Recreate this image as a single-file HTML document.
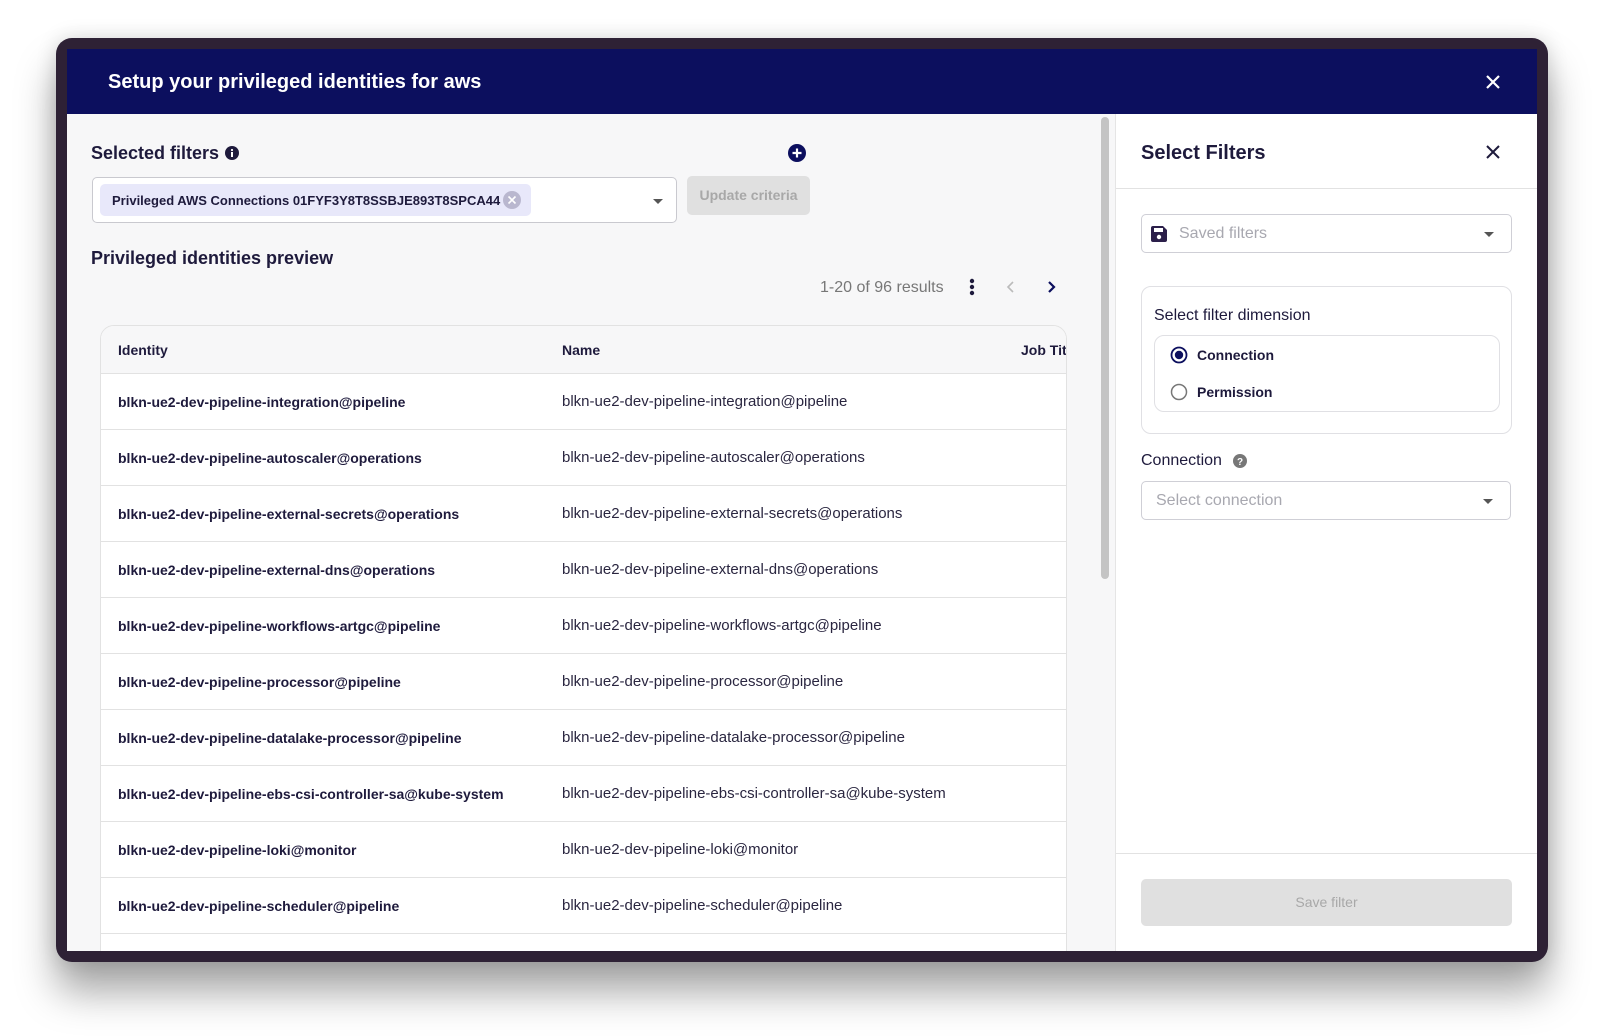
<!DOCTYPE html>
<html><head><meta charset="utf-8"><style>
*{box-sizing:border-box;margin:0;padding:0}
body{width:1604px;height:1036px;background:#fff;font-family:"Liberation Sans",sans-serif;position:relative;overflow:hidden;color:#1e1a3c}
.bezel{position:absolute;left:56px;top:38px;width:1492px;height:924px;background:#2e2135;border-radius:16px;box-shadow:0 30px 40px rgba(0,0,0,.35),0 0 20px rgba(0,0,0,.15)}
.modal{position:absolute;left:67px;top:49px;width:1470px;height:902px;background:#f7f7f8;overflow:hidden}
.hdr{position:absolute;left:0;top:0;width:100%;height:65px;background:#0c0f5e;color:#fff}
.hdr .t{position:absolute;left:41px;top:22px;font-size:20px;font-weight:bold}
.abs{position:absolute;white-space:nowrap}
.h3{font-size:18px;font-weight:bold;color:#1e1a3c}
.row{position:absolute;left:0;width:100%;height:56px;border-top:1px solid #e2e2e2;font-size:14px}
.row .a{position:absolute;left:17px;top:20px;font-weight:bold;white-space:nowrap}
.row .b{position:absolute;left:461px;top:19px;color:#2a2640;font-size:15px;white-space:nowrap}
.rp{position:absolute;left:1048px;top:65px;width:422px;height:837px;background:#fff;border-left:1px solid #e5e5e5}
.box{position:absolute;border:1px solid #cfcfd6;border-radius:5px;background:#fff}
.caret{position:absolute;width:0;height:0;border-left:5px solid transparent;border-right:5px solid transparent;border-top:5px solid #555}
</style></head><body>
<div class="bezel"></div>
<div class="modal">
 <div class="hdr"><div class="t">Setup your privileged identities for aws</div>
  <svg class="abs" style="left:1418px;top:25px" width="16" height="16" viewBox="0 0 16 16"><path d="M2 2L14 14M14 2L2 14" stroke="#fff" stroke-width="2.2"/></svg></div>
 <div class="abs h3" style="left:24px;top:94px">Selected filters</div>
 <svg class="abs" style="left:158px;top:97px" width="14" height="14"><circle cx="7" cy="7" r="7" fill="#1e1a3c"/><rect x="6" y="6" width="2" height="5" fill="#fff"/><circle cx="7" cy="4" r="1.1" fill="#fff"/></svg>
 <svg class="abs" style="left:721px;top:95px" width="18" height="18"><circle cx="9" cy="9" r="9" fill="#0c0f5e"/><path d="M9 4.5V13.5M4.5 9H13.5" stroke="#fff" stroke-width="2.2"/></svg>
 <div class="box" style="left:25px;top:128px;width:585px;height:46px;border-color:#c9c9cf">
  <div class="abs" style="left:7px;top:6px;width:431px;height:32px;background:#e8e8fa;border-radius:5px;font-size:13px;font-weight:bold;padding:9px 0 0 12px;color:#1e1a3c">Privileged AWS Connections 01FYF3Y8T8SSBJE893T8SPCA44</div>
  <svg class="abs" style="left:410px;top:13px" width="18" height="18"><circle cx="9" cy="9" r="9" fill="#b9b7cf"/><path d="M5.5 5.5L12.5 12.5M12.5 5.5L5.5 12.5" stroke="#fff" stroke-width="1.6"/></svg>
  <div class="caret" style="left:560px;top:21px"></div>
 </div>
 <div class="abs" style="left:620px;top:127px;width:123px;height:39px;background:#e0e0e0;border-radius:5px;color:#a8a8a8;font-size:14px;font-weight:bold;text-align:center;line-height:39px">Update criteria</div>
 <div class="abs h3" style="left:24px;top:199px">Privileged identities preview</div>
 <div class="abs" style="left:753px;top:230px;font-size:16px;color:#777">1-20 of 96 results</div>
 <svg class="abs" style="left:898px;top:228px" width="14" height="20"><circle cx="7" cy="4" r="2.2" fill="#1e1a3c"/><circle cx="7" cy="10" r="2.2" fill="#1e1a3c"/><circle cx="7" cy="16" r="2.2" fill="#1e1a3c"/></svg>
 <svg class="abs" style="left:938px;top:231px" width="12" height="14"><path d="M8 2L3 7L8 12" stroke="#bbb" stroke-width="1.6" fill="none"/></svg>
 <svg class="abs" style="left:978px;top:231px" width="12" height="14"><path d="M4 2L9 7L4 12" stroke="#0c0f5e" stroke-width="2.2" fill="none"/></svg>
 <div class="abs" style="left:33px;top:276px;width:967px;height:640px;background:#fff;border:1px solid #e2e2e2;border-radius:14px 14px 0 0;overflow:hidden">
  <div class="abs" style="left:0;top:0;width:100%;height:48px;background:#f7f7f8;font-size:14px;font-weight:bold">
   <div class="abs" style="left:17px;top:16px">Identity</div><div class="abs" style="left:461px;top:16px">Name</div><div class="abs" style="left:920px;top:16px">Job Title</div></div>
  <div class="row" style="top:47px"><div class="a">blkn-ue2-dev-pipeline-integration@pipeline</div><div class="b">blkn-ue2-dev-pipeline-integration@pipeline</div></div>
  <div class="row" style="top:103px"><div class="a">blkn-ue2-dev-pipeline-autoscaler@operations</div><div class="b">blkn-ue2-dev-pipeline-autoscaler@operations</div></div>
  <div class="row" style="top:159px"><div class="a">blkn-ue2-dev-pipeline-external-secrets@operations</div><div class="b">blkn-ue2-dev-pipeline-external-secrets@operations</div></div>
  <div class="row" style="top:215px"><div class="a">blkn-ue2-dev-pipeline-external-dns@operations</div><div class="b">blkn-ue2-dev-pipeline-external-dns@operations</div></div>
  <div class="row" style="top:271px"><div class="a">blkn-ue2-dev-pipeline-workflows-artgc@pipeline</div><div class="b">blkn-ue2-dev-pipeline-workflows-artgc@pipeline</div></div>
  <div class="row" style="top:327px"><div class="a">blkn-ue2-dev-pipeline-processor@pipeline</div><div class="b">blkn-ue2-dev-pipeline-processor@pipeline</div></div>
  <div class="row" style="top:383px"><div class="a">blkn-ue2-dev-pipeline-datalake-processor@pipeline</div><div class="b">blkn-ue2-dev-pipeline-datalake-processor@pipeline</div></div>
  <div class="row" style="top:439px"><div class="a">blkn-ue2-dev-pipeline-ebs-csi-controller-sa@kube-system</div><div class="b">blkn-ue2-dev-pipeline-ebs-csi-controller-sa@kube-system</div></div>
  <div class="row" style="top:495px"><div class="a">blkn-ue2-dev-pipeline-loki@monitor</div><div class="b">blkn-ue2-dev-pipeline-loki@monitor</div></div>
  <div class="row" style="top:551px"><div class="a">blkn-ue2-dev-pipeline-scheduler@pipeline</div><div class="b">blkn-ue2-dev-pipeline-scheduler@pipeline</div></div>
  <div class="row" style="top:607px"></div>
 </div>
 <div class="abs" style="left:1034px;top:68px;width:8px;height:462px;background:#c4c4c4;border-radius:4px"></div>
 <div class="rp">
  <div class="abs" style="left:25px;top:28px;font-size:20px;font-weight:bold">Select Filters</div>
  <svg class="abs" style="left:369px;top:30px" width="16" height="16"><path d="M2 2L14 14M14 2L2 14" stroke="#1e1a3c" stroke-width="2"/></svg>
  <div class="abs" style="left:0;top:74px;width:100%;height:1px;background:#e2e2e2"></div>
  <div class="box" style="left:25px;top:100px;width:371px;height:39px">
   <svg class="abs" style="left:8px;top:10px" width="18" height="18"><path d="M1 3a2 2 0 0 1 2-2h10l4 4v10a2 2 0 0 1-2 2H3a2 2 0 0 1-2-2z" fill="#2b1f4a"/><rect x="4" y="3" width="9" height="4" fill="#fff"/><circle cx="9" cy="12" r="2.2" fill="#fff"/></svg>
   <div class="abs" style="left:37px;top:10px;font-size:16px;color:#a8a8b0">Saved filters</div>
   <div class="caret" style="left:342px;top:17px"></div>
  </div>
  <div class="box" style="left:25px;top:172px;width:371px;height:148px;border-color:#e0e0e4;border-radius:10px">
   <div class="abs" style="left:12px;top:20px;font-size:16px">Select filter dimension</div>
   <div class="box" style="left:12px;top:48px;width:346px;height:77px;border-color:#e0e0e4;border-radius:10px">
    <svg class="abs" style="left:15px;top:10px" width="18" height="18"><circle cx="9" cy="9" r="7.5" fill="none" stroke="#0c0f5e" stroke-width="1.8"/><circle cx="9" cy="9" r="4.2" fill="#0c0f5e"/></svg>
    <div class="abs" style="left:42px;top:11px;font-size:14px;font-weight:bold">Connection</div>
    <svg class="abs" style="left:15px;top:47px" width="18" height="18"><circle cx="9" cy="9" r="7.5" fill="none" stroke="#777" stroke-width="1.5"/></svg>
    <div class="abs" style="left:42px;top:48px;font-size:14px;font-weight:bold">Permission</div>
   </div>
  </div>
  <div class="abs" style="left:25px;top:338px;font-size:16px">Connection</div>
  <svg class="abs" style="left:117px;top:340px" width="14" height="14"><circle cx="7" cy="7" r="7" fill="#777"/><text x="7" y="11" font-size="10" font-weight="bold" fill="#fff" text-anchor="middle" font-family="Liberation Sans">?</text></svg>
  <div class="box" style="left:25px;top:367px;width:370px;height:39px">
   <div class="abs" style="left:14px;top:10px;font-size:16px;color:#a8a8b0">Select connection</div>
   <div class="caret" style="left:341px;top:17px"></div>
  </div>
  <div class="abs" style="left:0;top:739px;width:100%;height:1px;background:#e2e2e2"></div>
  <div class="abs" style="left:25px;top:765px;width:371px;height:47px;background:#e0e0e0;border-radius:5px;text-align:center;line-height:47px;font-size:14px;color:#a8a8a8">Save filter</div>
 </div>
</div>
</body></html>
